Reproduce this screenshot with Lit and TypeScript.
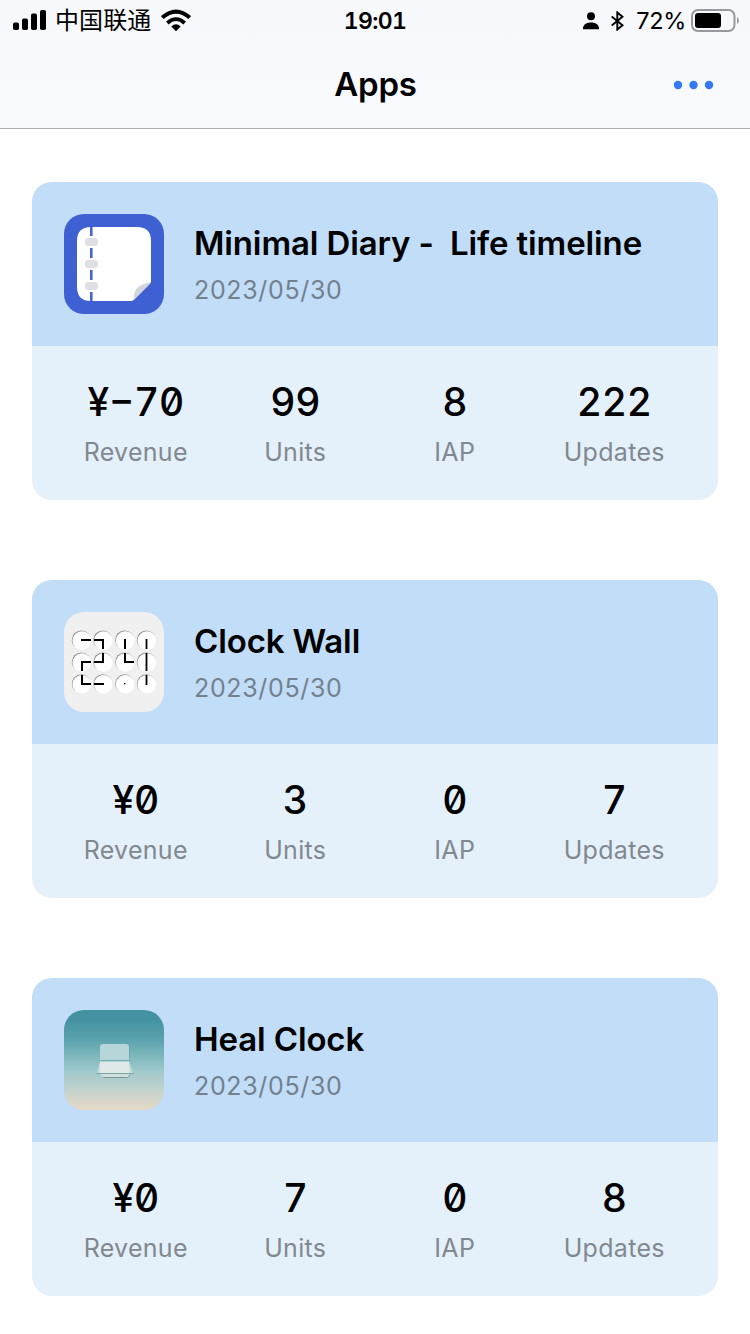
import { LitElement, html, svg, css } from "lit";
import { customElement, property } from "lit/decorators.js";

interface AppInfo {
  name: string;
  date: string;
  icon: "diary" | "clocks" | "heal";
  stats: [string, string][];
}

const DATE = "2023/05/30";
const APPS: AppInfo[] = [
  {
    name: "Minimal Diary -  Life timeline",
    date: DATE,
    icon: "diary",
    stats: [["¥−70", "Revenue"], ["99", "Units"], ["8", "IAP"], ["222", "Updates"]],
  },
  {
    name: "Clock Wall",
    date: DATE,
    icon: "clocks",
    stats: [["¥0", "Revenue"], ["3", "Units"], ["0", "IAP"], ["7", "Updates"]],
  },
  {
    name: "Heal Clock",
    date: DATE,
    icon: "heal",
    stats: [["¥0", "Revenue"], ["7", "Units"], ["0", "IAP"], ["8", "Updates"]],
  },
];

const diaryIcon = html`<svg width="100" height="100" viewBox="0 0 100 100">
  <rect width="100" height="100" fill="#3e60d2" />
  <path d="M27 13H73Q87 13 87 27V68L68 87H27Q13 87 13 73V27Q13 13 27 13Z" fill="#fff" />
  <path d="M87 68Q77 70 73 74Q70 78 70 84L68 87L70 86L86 70Z" fill="#d2d5dc" />
  <path d="M27.3 13v9M27.3 34v10M27.3 56v10M27.3 78v9" stroke="#4766d6" stroke-width="2.6" />
  <g fill="#dfe0e6">
    <rect x="21" y="24" width="13" height="8" rx="3.2" />
    <rect x="21" y="46" width="13" height="8" rx="3.2" />
    <rect x="21" y="68" width="13" height="8" rx="3.2" />
  </g>
</svg>`;

const clockFaces = [28.2, 50.2, 72].flatMap((y) =>
  [17.5, 39, 60.8, 82.5].map(
    (x) => svg`
      <circle cx=${x} cy=${y} r="9.7" fill="url(#rim)" />
      <circle cx=${x + 0.3} cy=${y + 0.4} r="9.3" fill="#fff" />`
  )
);

const clocksIcon = html`<svg width="100" height="100" viewBox="0 0 100 100">
  <defs>
    <linearGradient id="rim" x1="0" y1="0" x2="1" y2="1">
      <stop offset="0.1" stop-color="#777" />
      <stop offset="0.6" stop-color="#dcdcdc" />
      <stop offset="1" stop-color="#f6f6f6" />
    </linearGradient>
  </defs>
  <rect width="100" height="100" fill="#f0f0f0" />
  ${clockFaces}
  <g fill="none" stroke="#000" stroke-width="2">
    <path d="M17 28H27M30 28H39V37M39 41V50H30M27 50H18V59M18 63V72H27M30 72H40" />
    <path d="M61 27V37M61 41V50H70" />
    <path d="M82.5 27V37M82.5 41V59M82.5 63V73" stroke-width="1.8" />
    <path d="M60 71.7H61.5" stroke-width="1.3" />
  </g>
</svg>`;

const healIcon = html`<svg width="100" height="100" viewBox="0 0 100 100">
  <defs>
    <linearGradient id="sky" x1="0" y1="0" x2="0" y2="1">
      <stop offset="0.1" stop-color="#4492a1" />
      <stop offset="0.3" stop-color="#5ba3ad" />
      <stop offset="0.6" stop-color="#9dc8cb" />
      <stop offset="0.8" stop-color="#c4d3cd" />
      <stop offset="1" stop-color="#e5d9c6" />
    </linearGradient>
  </defs>
  <rect width="100" height="100" fill="url(#sky)" />
  <path d="M39 34H63Q66 34 66 37V51H37V37" fill="#659fa4" opacity="0.6" />
  <path d="M39 34H62Q65 34 65 37V50H36V37Q36 34 39 34Z" fill="#b6d6d9" />
  <path d="M36 51.5H65L69 64H33Z" fill="#c8dedc" />
  <path d="M36 51.8H65V63H36Z" fill="#dfeae8" />
  <path d="M37 64H66V65Q65 68 62 68H40Q37 67 37 64Z" fill="#729b9b" />
  <path d="M36 63.5H66L64 67H38Z" fill="#d1e0dc" />
  <path d="M32.5 63.5H69.5" stroke="#769d9d" stroke-width="0.9" />
</svg>`;

const ICONS = { diary: diaryIcon, clocks: clocksIcon, heal: healIcon };

@customElement("app-card")
export class AppCard extends LitElement {
  @property({ attribute: false }) app!: AppInfo;

  static styles = css`
    :host {
      display: block;
      border-radius: 20px;
      overflow: hidden;
      background: #e4f1fb;
    }
    .head {
      display: flex;
      align-items: center;
      gap: 30px;
      height: 164px;
      padding: 0 32px;
      box-sizing: border-box;
      background: #c1ddf8;
    }
    .icon {
      width: 100px;
      height: 100px;
      border-radius: 20px;
      overflow: hidden;
      flex: none;
    }
    .icon svg {
      display: block;
    }
    .name {
      font-size: 33px;
      font-weight: 560;
      line-height: 48px;
      letter-spacing: -0.13px;
      white-space: pre;
      color: #000;
    }
    .date {
      font-size: 25px;
      line-height: 46px;
      letter-spacing: 0.65px;
      color: #73818f;
    }
    .text {
      padding-top: 4px;
    }
    .stats {
      display: grid;
      grid-template-columns: repeat(4, 1fr);
      height: 154px;
      box-sizing: border-box;
      padding: 32px 24px 0;
      text-align: center;
    }
    .value {
      font-size: 39px;
      font-weight: 540;
      line-height: 48px;
      letter-spacing: -0.2px;
      font-feature-settings: "tnum", "zero", "case";
      color: #000;
    }
    .label {
      font-size: 25px;
      line-height: 52px;
      letter-spacing: 0.3px;
      color: #828890;
    }
  `;

  render() {
    return html`
      <div class="head">
        <div class="icon">${ICONS[this.app.icon]}</div>
        <div class="text">
          <div class="name">${this.app.name}</div>
          <div class="date">${this.app.date}</div>
        </div>
      </div>
      <div class="stats">
        ${this.app.stats.map(
          ([value, label]) => html`<div>
            <div class="value">${value}</div>
            <div class="label">${label}</div>
          </div>`
        )}
      </div>
    `;
  }
}

@customElement("app-root")
export class AppRoot extends LitElement {
  static styles = css`
    :host {
      display: block;
      height: 1334px;
      overflow: hidden;
      background: #fff;
      font-family: Inter, "Noto Sans CJK SC", sans-serif;
      color: #000;
    }
    .top {
      height: 129px;
      box-sizing: border-box;
      border-bottom: 1px solid #adaeb0;
      background: linear-gradient(#f6f8fb, #f9fafd);
    }
    .status,
    .nav {
      display: grid;
      grid-template-columns: 1fr auto 1fr;
      align-items: center;
    }
    .status {
      height: 41px;
      padding: 0 12px 0 13px;
      margin-right: -1px;
    }
    .side {
      display: flex;
      align-items: center;
    }
    .side svg,
    .more {
      display: block;
      flex: none;
    }
    .carrier {
      font-family: "Noto Sans CJK SC", sans-serif;
      font-size: 24px;
      line-height: 36px;
      padding-bottom: 4px;
      letter-spacing: 0.1px;
      margin: 0 10px 0 9px;
    }
    .time {
      font-size: 23px;
      font-weight: 560;
      letter-spacing: -0.6px;
      font-feature-settings: "tnum";
      margin-right: 2px;
    }
    .right {
      justify-content: flex-end;
    }
    .person {
      margin-right: 12px;
    }
    .bt {
      margin-right: 12px;
    }
    .pct {
      font-size: 23.5px;
      letter-spacing: -0.3px;
      margin-right: 5px;
    }
    .nav {
      height: 85px;
      padding: 0 36px;
    }
    .title {
      grid-column: 2;
      font-size: 33px;
      font-weight: 580;
      letter-spacing: -0.2px;
      line-height: 40px;
      padding-left: 1px;
    }
    .more {
      justify-self: end;
      margin-top: 2px;
    }
    .list {
      display: flex;
      flex-direction: column;
      gap: 80px;
      padding: 53px 32px 0;
    }
  `;

  render() {
    return html`
      <header class="top">
        <div class="status">
          <div class="side">
            <svg width="33" height="22" viewBox="0 0 33 22">
              <rect x="0" y="12.5" width="6" height="7.5" rx="1.8" />
              <rect x="9" y="8.5" width="6" height="11.5" rx="1.8" />
              <rect x="18" y="3.5" width="6" height="16.5" rx="1.8" />
              <rect x="27" y="0" width="6" height="20" rx="1.8" />
            </svg>
            <span class="carrier">中国联通</span>
            <svg width="30" height="24" viewBox="0 0 30 24" fill="none" stroke="#000">
              <path d="M1.3 8.6Q15 -3.5 28.7 8.6" stroke-width="4" />
              <path d="M6.3 14Q15 6.2 23.7 14" stroke-width="3.7" />
              <path d="M10.3 17.5Q15 13.2 19.7 17.5L15 22.2Z" fill="#000" stroke="none" />
            </svg>
          </div>
          <span class="time">19:01</span>
          <div class="side right">
            <svg class="person" width="16" height="18" viewBox="0 0 16 18">
              <circle cx="8" cy="4.3" r="4" />
              <path d="M0 17.3V15.8C.7 12.3 3.7 10.6 8 10.6S15.3 12.3 16 15.8V17.3Z" />
            </svg>
            <svg class="bt" width="13" height="20" viewBox="0 0 13 20" fill="none" stroke="#000" stroke-width="1.9">
              <path d="M.7 5.4L11.5 14.3L6.3 18.6V1.4L11.5 5.7L.7 14.6" />
            </svg>
            <span class="pct">72%</span>
            <svg width="48" height="24" viewBox="0 0 48 24">
              <rect x="1" y="1" width="42.5" height="21" rx="6" fill="none" stroke="#98999c" stroke-width="2" />
              <rect x="4" y="4" width="26" height="15" rx="3" />
              <path d="M46 8Q48 9.5 48 11.5T46 15Z" fill="#98999c" />
            </svg>
          </div>
        </div>
        <div class="nav">
          <span class="title">Apps</span>
          <svg class="more" width="41" height="10" viewBox="0 0 41 10" fill="#3478f6">
            <circle cx="5" cy="5" r="4.2" />
            <circle cx="20.5" cy="5" r="4.2" />
            <circle cx="36" cy="5" r="4.2" />
          </svg>
        </div>
      </header>
      <main class="list">
        ${APPS.map((app) => html`<app-card .app=${app}></app-card>`)}
      </main>
    `;
  }
}
